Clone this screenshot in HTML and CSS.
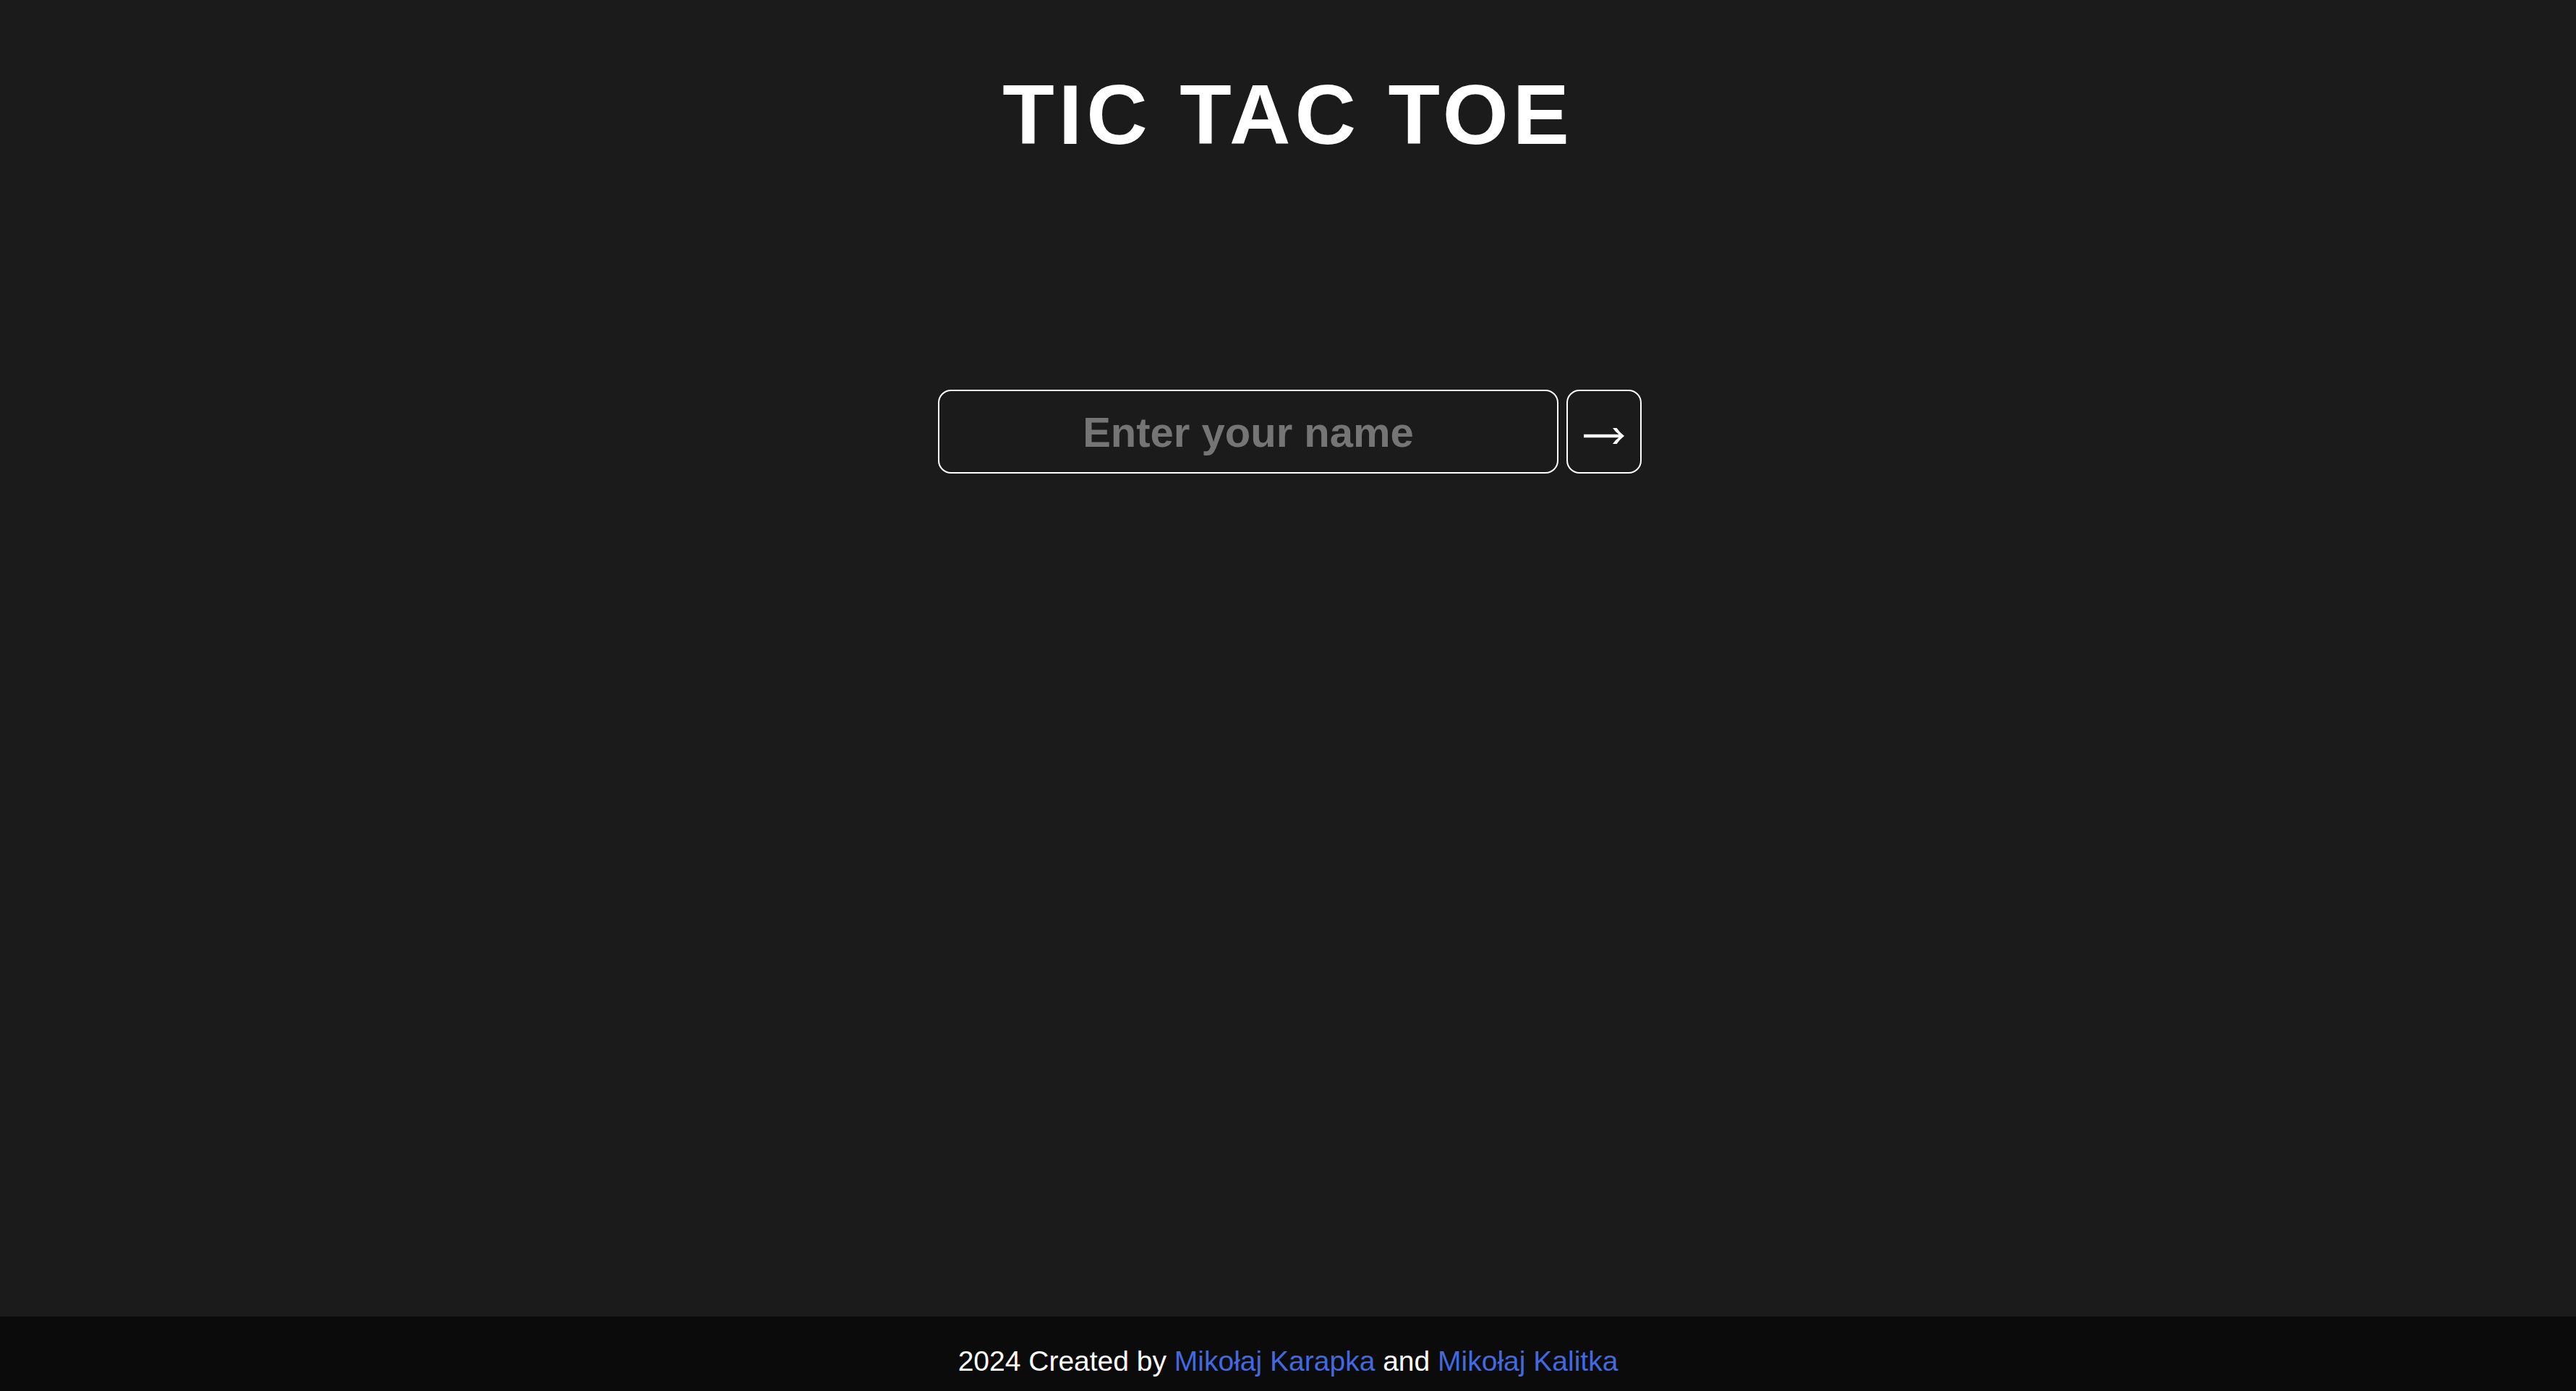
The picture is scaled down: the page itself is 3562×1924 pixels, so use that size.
FILE: index.html
```html
<!DOCTYPE html>
<html lang="en">
<head>
<meta charset="utf-8">
<title>Tic Tac Toe</title>
<link rel="stylesheet" href="styles.css">
</head>
<body>
<main class="main">
  <h1 class="title">TIC TAC TOE</h1>
  <form class="name-form">
    <input class="name-input" type="text" placeholder="Enter your name">
    <button class="go-btn" type="button" aria-label="Start">
      <svg class="arrow" width="56" height="22" viewBox="0 0 56 22"><path d="M40 0 L45.5 0 Q50 6.5 56 11 Q50 15.5 45.5 22 L40 22 Q44 16 48.5 13.3 L0 13.3 L0 8.7 L48.5 8.7 Q44 6 40 0 Z" fill="#ffffff"/></svg>
    </button>
  </form>
</main>
<footer class="footer">
  <p class="credits">2024 Created by <a class="author" href="#">Mikołaj Karapka</a> and <a class="author" href="#">Mikołaj Kalitka</a></p>
</footer>
</body>
</html>
```
FILE: styles.css
```css
html, body {
  margin: 0;
  padding: 0;
}
body {
  background: #1b1b1b;
  color: #ffffff;
  font-family: "Liberation Sans", Arial, Helvetica, sans-serif;
  min-height: 100vh;
  display: flex;
  flex-direction: column;
}
.main {
  flex: 1;
  display: flex;
  flex-direction: column;
  align-items: center;
  padding-top: 91px;
}
.title {
  margin: 0;
  font-size: 117px;
  font-weight: 700;
  letter-spacing: 6px;
  line-height: normal;
  color: #ffffff;
}
.name-form {
  margin-top: 313px;
  padding-left: 5px;
  display: flex;
  gap: 11px;
}
.name-input {
  box-sizing: border-box;
  width: 858px;
  height: 116px;
  background: transparent;
  border: 2px solid #ffffff;
  border-radius: 18px;
  color: #ffffff;
  font-family: "Liberation Sans", Arial, sans-serif;
  font-size: 58px;
  font-weight: 700;
  text-align: center;
  outline: none;
  padding: 0 20px;
}
.name-input::placeholder {
  color: #757575;
}
.go-btn {
  box-sizing: border-box;
  width: 104px;
  height: 116px;
  background: transparent;
  border: 2px solid #ffffff;
  border-radius: 18px;
  display: flex;
  align-items: center;
  justify-content: center;
  padding: 12px 0 0 0;
  cursor: pointer;
}
.arrow {
  display: block;
}
.footer {
  background: #0b0b0b;
  height: 103px;
  box-sizing: border-box;
  padding-top: 39px;
  text-align: center;
}
.credits {
  margin: 0;
  font-size: 39px;
  line-height: 46px;
  color: #ffffff;
}
.author {
  color: #4169e1;
  text-decoration: none;
}
```
